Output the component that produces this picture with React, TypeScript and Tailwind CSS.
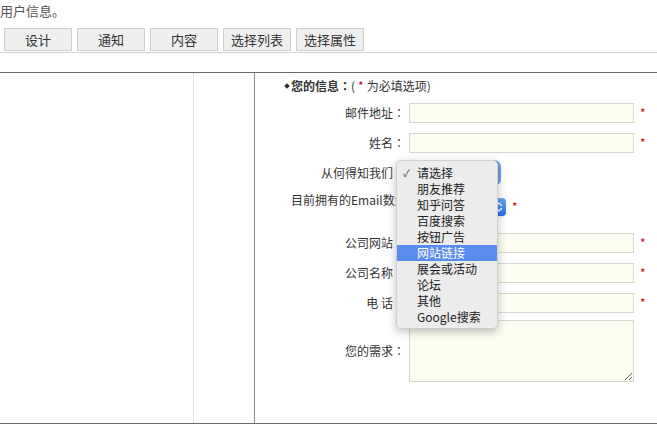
import React from "react";

const tabs = ["设计", "通知", "内容", "选择列表", "选择属性"];
const options = ["请选择", "朋友推荐", "知乎问答", "百度搜索", "按钮广告", "网站链接", "展会或活动", "论坛", "其他", "Google搜索"];

function Star() {
  return <span className="ml-[6px] text-[12px] text-[#d0021b] leading-none">*</span>;
}

function Colon() {
  return <span className="font-['Noto_Sans_CJK_TC',sans-serif]">：</span>;
}

function InputRow({ label }: { label: string }) {
  return (
    <div className="flex h-[30px] items-center">
      <div className="w-[150px] shrink-0 text-right text-[12px] text-[#333] whitespace-pre">
        {label}
        <Colon />
      </div>
      <input className="ml-[4px] h-[20px] w-[225px] border border-[#d6d6cc] bg-[#fdfdf1] outline-none" />
      <Star />
    </div>
  );
}

export default function App() {
  return (
    <div className="relative h-[437px] w-[657px] overflow-hidden bg-white font-['Noto_Sans_CJK_SC','Noto_Sans',sans-serif] text-[#333]">
      <div className="h-[22px] text-[13px] leading-[22px] text-[#555]">用户信息。</div>
      <div className="mt-[6px] flex gap-[5px] border-b border-[#cfcfcf] pb-[1px] pl-[4px]">
        {tabs.map((t) => (
          <div key={t} className="flex h-[23px] w-[68px] items-center justify-center border border-[#cdcdcd] bg-[#efefef] text-[13px] text-[#333]">
            {t}
          </div>
        ))}
      </div>
      <div className="mt-[19px] flex h-[352px] border-y border-[#6a6a6a]">
        <div className="w-[194px] shrink-0 border-r border-[#e4e4e4]" />
        <div className="w-[61px] shrink-0 border-r border-[#8a8a8a]" />
        <div className="flex flex-1 flex-col">
          <div className="flex h-[25px] items-center pl-[30px] text-[12px] text-[#333]">
            <span className="mr-[2px] inline-block h-[4px] w-[4px] rotate-45 bg-[#333]" />
            <span className="font-bold">
              您的信息<Colon />
            </span>
            <span>(</span>
            <span className="mx-[3px] text-[#d0021b]">*</span>
            <span>为必填选项)</span>
          </div>
          <InputRow label="邮件地址" />
          <InputRow label="姓名" />
          <div className="flex h-[30px] items-center">
            <div className="w-[150px] shrink-0 text-right text-[12px] text-[#333]">
              从何得知我们<Colon />
            </div>
            <div className="relative ml-[4px] h-[20px] w-[89px] rounded-[4px] border border-[#a9a9a9] bg-white ring-[3px] ring-[#6f9ff0]">
              <div className="absolute inset-y-0 right-0 w-[14px] rounded-r-[3px] bg-[#3f7ff0]" />
            </div>
          </div>
          <div className="flex h-[40px] items-start">
            <div className="mt-[4px] w-[150px] shrink-0 whitespace-nowrap pl-[36px] text-[12px] leading-[16px] text-[#333]">
              目前拥有的Email数量<Colon />
            </div>
            <div className="mt-[10px] flex items-center">
              <div className="relative ml-[4px] h-[18px] w-[97px] rounded-[4px] border border-[#b5b5b5] bg-white shadow-sm">
                <div className="absolute inset-y-[-1px] right-[-1px] flex w-[15px] items-center justify-center rounded-r-[4px] bg-gradient-to-b from-[#6aa3f7] to-[#2f6fe8]">
                  <svg width="8" height="12" viewBox="0 0 8 12" fill="none" stroke="white" strokeWidth="1.4" strokeLinecap="round" strokeLinejoin="round">
                    <path d="M1.5 4.5 L4 2 L6.5 4.5" />
                    <path d="M1.5 7.5 L4 10 L6.5 7.5" />
                  </svg>
                </div>
              </div>
              <Star />
            </div>
          </div>
          <InputRow label="公司网站" />
          <InputRow label="公司名称" />
          <InputRow label="电 话" />
          <div className="flex h-[66px] items-center">
            <div className="w-[150px] shrink-0 text-right text-[12px] text-[#333]">
              您的需求<Colon />
            </div>
            <textarea className="ml-[4px] h-[62px] w-[225px] border border-[#d6d6cc] bg-[#fdfdf1] outline-none" />
          </div>
        </div>
      </div>

      <div className="absolute left-[396px] top-[160px] w-[102px] rounded-[5px] border border-[#cfcfcf] bg-[#ececec] pb-[3px] pt-[4px] shadow-[0_3px_10px_rgba(0,0,0,0.25)]">
        {options.map((o, i) => (
          <div
            key={o}
            className={
              i === 5
                ? "relative h-[16px] bg-[#5a8cf0] pl-[20px] text-[12px] leading-[16px] text-white"
                : "relative h-[16px] pl-[20px] text-[12px] leading-[16px] text-[#222]"
            }
          >
            {i === 0 && <span className="absolute left-[6px] top-0 text-[10px] leading-[16px] text-[#333]">✓</span>}
            {o}
          </div>
        ))}
      </div>
    </div>
  );
}
